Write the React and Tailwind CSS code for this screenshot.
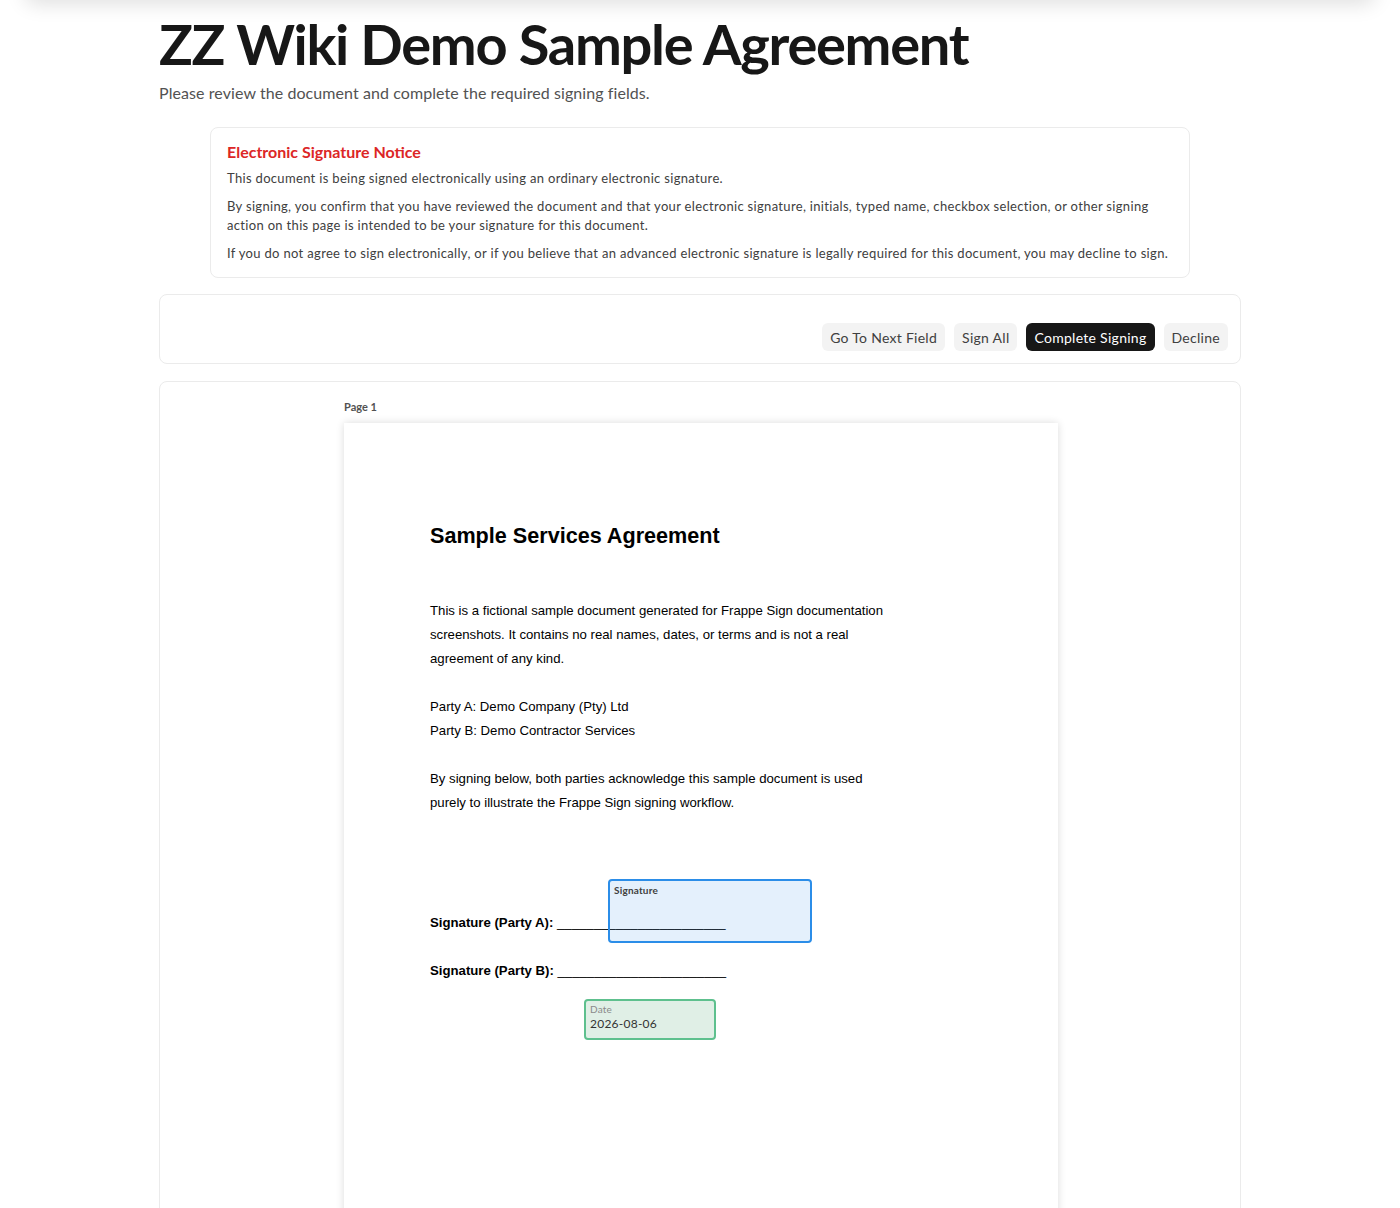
export default function App() {
  const lato = { fontFamily: 'Lato, "Noto Sans", sans-serif' };
  const buttons = [
    { label: 'Go To Next Field', dark: false },
    { label: 'Sign All', dark: false },
    { label: 'Complete Signing', dark: true },
    { label: 'Decline', dark: false },
  ];

  return (
    <div className="min-h-screen bg-white font-['Lato',sans-serif] text-[#171717]">
      {/* header sits above the viewport, only its shadow shows */}
      <div className="-mt-6 mx-[24px] h-6 rounded-2xl bg-white shadow-[0_4px_20px_rgba(0,0,0,0.13)]" />

      <div className="mx-auto w-[1082px]">
        <h1 className="mt-[12px] text-[56px] font-bold leading-[64px] tracking-[-0.023em] text-[#171717]">
          ZZ Wiki Demo Sample Agreement
        </h1>
        <p className="mt-[5px] text-[16px] leading-[24px] tracking-[0.005em] text-[#525252]">
          Please review the document and complete the required signing fields.
        </p>

        {/* notice */}
        <div className="mx-auto mt-[22px] w-[980px] rounded-lg border border-[#ebebeb] px-4 pt-[13px] pb-[14px]">
          <h2 className="text-[16px] font-bold leading-[22px] text-[#dc2626]">Electronic Signature Notice</h2>
          <div className="mt-[6px] flex flex-col gap-[9px] text-[13px] leading-[19px] tracking-[0.025em] text-[#404040]">
            <p>This document is being signed electronically using an ordinary electronic signature.</p>
            <p>
              By signing, you confirm that you have reviewed the document and that your electronic signature, initials,
              typed name, checkbox selection, or other signing action on this page is intended to be your signature for
              this document.
            </p>
            <p>
              If you do not agree to sign electronically, or if you believe that an advanced electronic signature is
              legally required for this document, you may decline to sign.
            </p>
          </div>
        </div>

        {/* toolbar */}
        <div className="mt-4 flex justify-end gap-[9px] rounded-lg border border-[#ebebeb] px-[12px] pt-[28px] pb-[12px]">
          {buttons.map((b) => (
            <button
              key={b.label}
              className={
                b.dark
                  ? 'h-[28px] rounded-md bg-[#171717] px-2 text-[14px] tracking-[0.02em] text-white'
                  : 'h-[28px] rounded-md bg-[#f3f3f3] px-2 text-[14px] tracking-[0.02em] text-[#404040]'
              }
            >
              {b.label}
            </button>
          ))}
        </div>

        {/* document viewer */}
        <div className="mt-[17px] h-[900px] rounded-lg border border-[#ebebeb] pt-[18px]">
          <div className="mx-auto w-[716px] pl-[2px]">
            <div className="text-[11px] font-bold leading-[14px] text-[#525252]">Page 1</div>
            <div className="relative mt-[9px] h-[1000px] bg-white shadow-[0_0_8px_rgba(0,0,0,0.14)]" style={{ fontFamily: '"Liberation Sans", Arial, sans-serif' }}>
              <div className="pl-[86px] pt-[99px] text-[13.2px] leading-[24px] text-black">
                <h3 className="text-[21.6px] font-bold leading-[28px]">Sample Services Agreement</h3>
                <p className="mt-[49px]">
                  This is a fictional sample document generated for Frappe Sign documentation
                  <br />
                  screenshots. It contains no real names, dates, or terms and is not a real
                  <br />
                  agreement of any kind.
                </p>
                <p className="mt-[24px]">Party A: Demo Company (Pty) Ltd</p>
                <p>Party B: Demo Contractor Services</p>
                <p className="mt-[24px]">
                  By signing below, both parties acknowledge this sample document is used
                  <br />
                  purely to illustrate the Frappe Sign signing workflow.
                </p>
                <p className="mt-[96px]">
                  <b>Signature (Party A):</b> _______________________
                </p>
                <p className="mt-[24px]">
                  <b>Signature (Party B):</b> _______________________
                </p>
              </div>

              {/* signature field */}
              <div className="absolute left-[264px] top-[456px] h-[64px] w-[204px] rounded-[4px] border-2 border-[#2b8de8] bg-[#2b8de8]/[0.13] px-[4px] pt-[2px]" style={lato}>
                <div className="text-[10px] font-bold leading-[14px] tracking-[0.02em] text-[#404040]">Signature</div>
              </div>

              {/* date field */}
              <div className="absolute left-[240px] top-[576px] h-[41px] w-[132px] rounded-[4px] border-2 border-[#5ec08e] bg-[#e0efe6] px-[4px] pt-[2px]" style={lato}>
                <div className="text-[10px] leading-[13px] tracking-[0.02em] text-[#8a8a8a]">Date</div>
                <div className="text-[12px] leading-[16px] tracking-[0.02em] text-[#333]">2026-08-06</div>
              </div>
            </div>
          </div>
        </div>
      </div>
    </div>
  );
}
